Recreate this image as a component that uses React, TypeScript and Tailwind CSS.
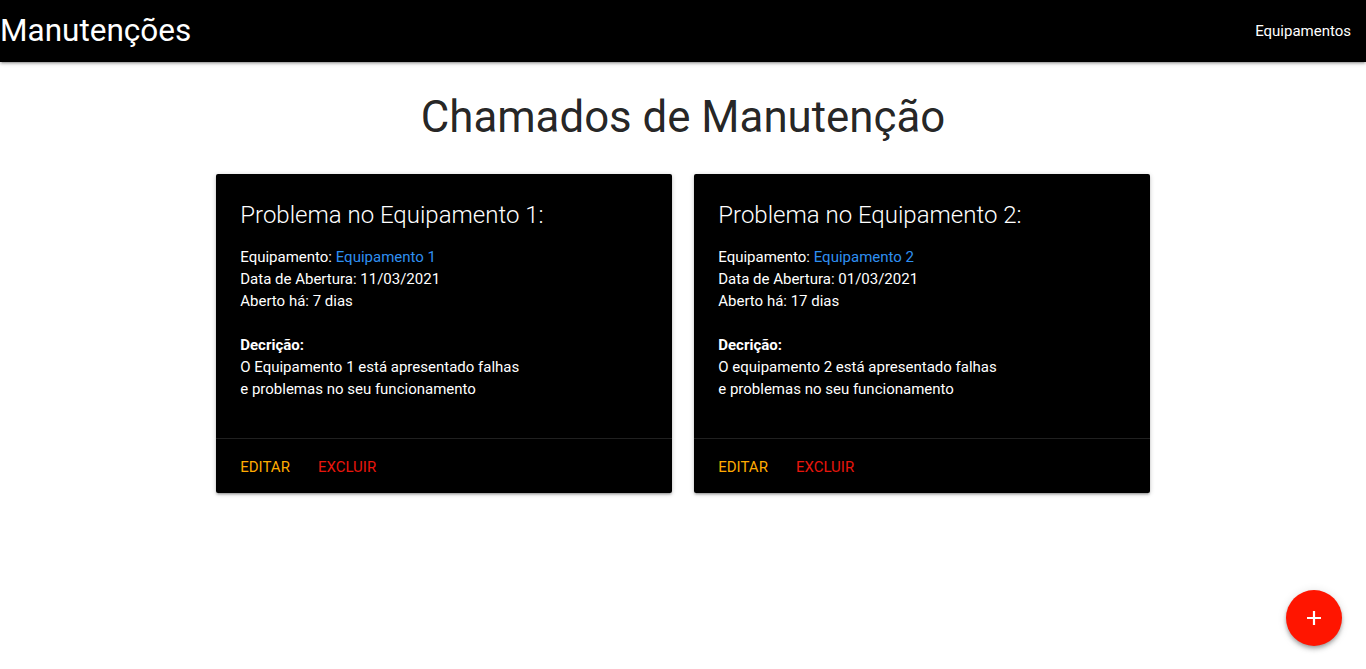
import React from "react";

const chamados = [
  {
    id: 1,
    titulo: "Problema no Equipamento 1:",
    equipamento: "Equipamento 1",
    abertura: "11/03/2021",
    dias: 7,
    descricao: ["O Equipamento 1 está apresentado falhas", "e problemas no seu funcionamento"],
  },
  {
    id: 2,
    titulo: "Problema no Equipamento 2:",
    equipamento: "Equipamento 2",
    abertura: "01/03/2021",
    dias: 17,
    descricao: ["O equipamento 2 está apresentado falhas", "e problemas no seu funcionamento"],
  },
];

export default function App() {
  return (
    <div className="min-h-[669px] bg-white font-['Roboto',sans-serif]">
      <nav className="h-[62px] bg-black flex items-center justify-between shadow-[0_2px_2px_0_rgba(0,0,0,0.14),0_3px_1px_-2px_rgba(0,0,0,0.12),0_1px_5px_0_rgba(0,0,0,0.2)]">
        <a className="text-white text-[31.5px] leading-[62px] pl-0">Manutenções</a>
        <a className="text-white text-[15px] px-[15px]">Equipamentos</a>
      </nav>

      <h3 className="text-center text-[43.8px] leading-[51px] text-[rgba(0,0,0,0.87)] mt-[30px] mb-[31px]">
        Chamados de Manutenção
      </h3>

      <div className="w-[956px] mx-auto grid grid-cols-2">
        {chamados.map((c) => (
          <div key={c.id} className="px-[11.25px]">
            <div className="bg-black rounded-[2px] shadow-[0_2px_2px_0_rgba(0,0,0,0.14),0_3px_1px_-2px_rgba(0,0,0,0.12),0_1px_5px_0_rgba(0,0,0,0.2)]">
              <div className="px-6 pt-[25px] pb-[38px] text-white text-[15px] leading-[22px]">
                <span className="block text-[24px] font-light leading-[32px] mb-[15px]">{c.titulo}</span>
                <p>
                  Equipamento: <a className="text-[#2f8ff0]">{c.equipamento}</a>
                </p>
                <p>Data de Abertura: {c.abertura}</p>
                <p>Aberto há: {c.dias} dias</p>
                <p>&nbsp;</p>
                <p className="font-bold">Decrição:</p>
                {c.descricao.map((l) => (
                  <p key={l}>{l}</p>
                ))}
              </div>
              <div className="border-t border-[rgba(160,160,160,0.2)] px-6 pt-[18px] pb-[15px] text-[15px] leading-[21px] uppercase">
                <a className="text-[#ffab00] mr-[28px]">Editar</a>
                <a className="text-[#e8160c]">Excluir</a>
              </div>
            </div>
          </div>
        ))}
      </div>

      <button className="fixed right-[24px] bottom-[23px] w-14 h-14 rounded-full bg-[#ff1500] flex items-center justify-center shadow-[0_4px_5px_0_rgba(0,0,0,0.14),0_1px_10px_0_rgba(0,0,0,0.12),0_2px_4px_-1px_rgba(0,0,0,0.3)]">
        <svg width="16" height="16" viewBox="0 0 16 16">
          <path d="M8 1v14M1 8h14" stroke="white" strokeWidth="2.2" />
        </svg>
      </button>
    </div>
  );
}
